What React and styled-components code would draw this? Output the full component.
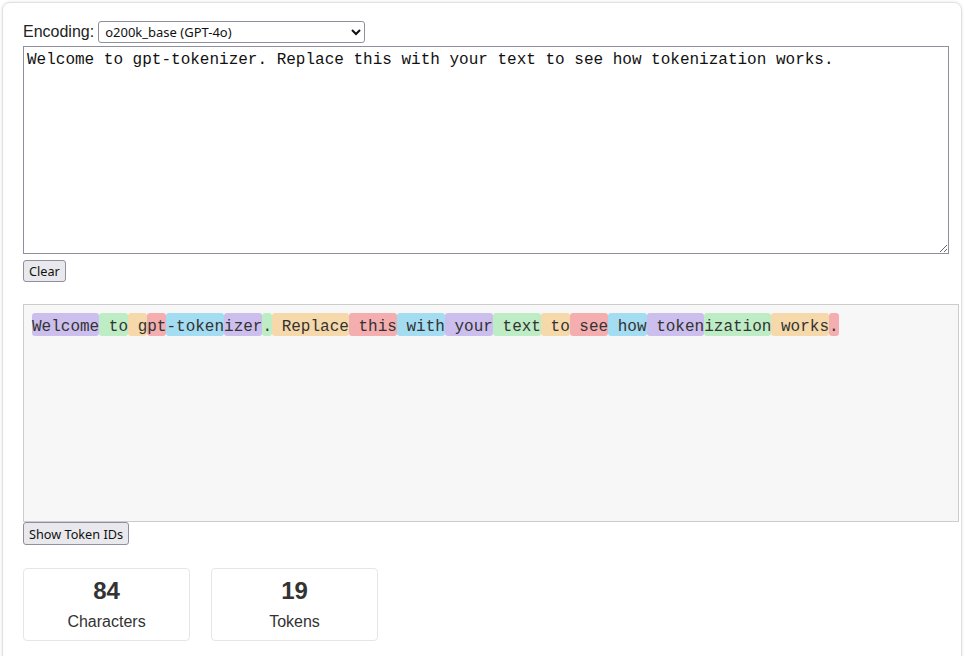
import styled, { createGlobalStyle } from "styled-components";

const GlobalStyle = createGlobalStyle`
  body {
    margin: 0;
    background: #fff;
    font-family: "Liberation Sans", Arial, sans-serif;
  }
`;

const Page = styled.div`
  padding: 2px 2px 0 2px;
`;

const Card = styled.div`
  border: 1px solid #e2e2e2;
  border-radius: 8px;
  box-shadow: 0 0 3px rgba(0, 0, 0, 0.12);
  padding: 18px 20px 20px 20px;
  min-height: 680px;
`;

const EncodingRow = styled.div`
  display: flex;
  align-items: center;
  height: 22px;
  font-size: 16px;
  color: #222;
`;

const Select = styled.select`
  margin-left: 4px;
  width: 267px;
  height: 22px;
  font-family: "Noto Sans", sans-serif;
  font-size: 13px;
  color: #111;
  background: #fff;
  border: 1px solid #8f8f9d;
  border-radius: 3px;
  padding: 0 2px;
`;

const TextArea = styled.textarea`
  display: block;
  box-sizing: border-box;
  margin-top: 3px;
  width: 926px;
  height: 208px;
  padding: 4px 3px 2px;
  border: 1px solid #8f8f9d;
  font-family: "Liberation Mono", monospace;
  font-size: 16px;
  color: #111;
  resize: both;
`;

const Button = styled.button`
  display: block;
  height: ${(p) => p.$h || 22}px;
  padding: 0 5px;
  font-family: "Noto Sans", sans-serif;
  font-size: 12.7px;
  color: #111;
  background: #e9e9ed;
  border: 1px solid #8f8f9d;
  border-radius: 3px;
  margin-top: ${(p) => p.$mt || 0}px;
`;

const Output = styled.div`
  box-sizing: border-box;
  margin-top: 22px;
  width: 936px;
  height: 218px;
  padding: 8px 8px;
  background: #f7f7f7;
  border: 1px solid #ccc;
  font-family: "Liberation Mono", monospace;
  font-size: 16px;
  color: #333;
`;

const colors = [
  "rgba(107, 64, 216, 0.3)",
  "rgba(104, 222, 122, 0.4)",
  "rgba(244, 172, 54, 0.4)",
  "rgba(239, 65, 70, 0.4)",
  "rgba(39, 181, 234, 0.4)",
];

const Token = styled.span`
  display: inline-block;
  height: 23px;
  padding-top: 2px;
  box-sizing: border-box;
  line-height: 24px;
  white-space: pre;
  border-radius: 3px;
  background: ${(p) => colors[p.$i % colors.length]};
`;

const Stats = styled.div`
  display: flex;
  gap: 21px;
  margin-top: 23px;
`;

const Stat = styled.div`
  box-sizing: border-box;
  width: 167px;
  height: 73px;
  border: 1px solid #e6e6e6;
  border-radius: 4px;
  display: flex;
  flex-direction: column;
  align-items: center;
  color: #333;
`;

const StatValue = styled.div`
  font-size: 24px;
  font-weight: bold;
  margin-top: 8px;
`;

const StatLabel = styled.div`
  font-size: 16px;
  margin-top: 8px;
`;

const text =
  "Welcome to gpt-tokenizer. Replace this with your text to see how tokenization works.";

const tokens = [
  "Welcome", " to", " g", "pt", "-token", "izer", ".", " Replace", " this",
  " with", " your", " text", " to", " see", " how", " token", "ization",
  " works", ".",
];

export default function App() {
  return (
    <Page>
      <GlobalStyle />
      <Card>
        <EncodingRow>
          Encoding:
          <Select defaultValue="o200k_base">
            <option value="o200k_base">o200k_base (GPT-4o)</option>
            <option value="cl100k_base">cl100k_base (GPT-3.5-turbo and GPT-4)</option>
          </Select>
        </EncodingRow>
        <TextArea defaultValue={text} />
        <Button $mt={6}>Clear</Button>
        <Output>
          {tokens.map((t, i) => (
            <Token key={i} $i={i}>{t}</Token>
          ))}
        </Output>
        <Button $h={23}>Show Token IDs</Button>
        <Stats>
          <Stat>
            <StatValue>84</StatValue>
            <StatLabel>Characters</StatLabel>
          </Stat>
          <Stat>
            <StatValue>19</StatValue>
            <StatLabel>Tokens</StatLabel>
          </Stat>
        </Stats>
      </Card>
    </Page>
  );
}
